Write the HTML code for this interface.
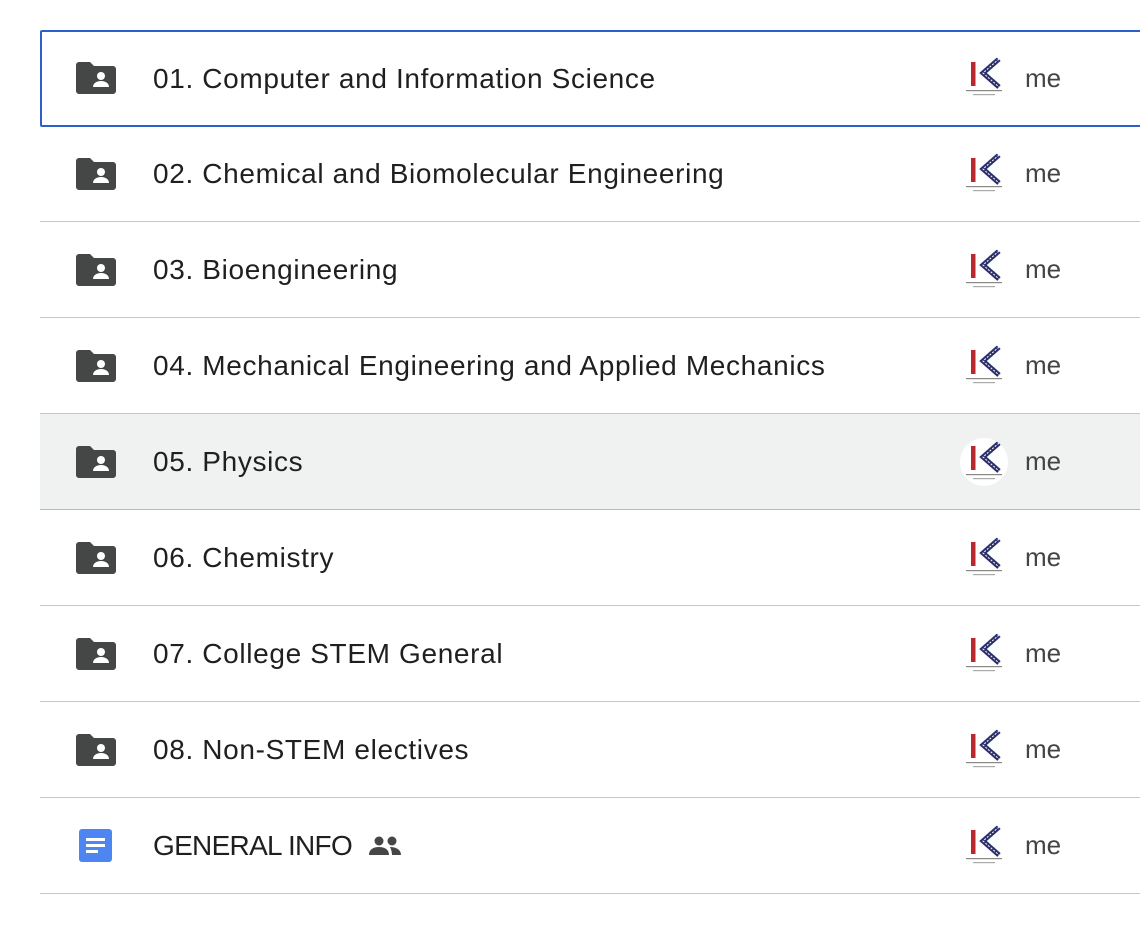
<!DOCTYPE html>
<html><head><style>
body{margin:0;width:1140px;height:934px;background:#fff;font-family:"Liberation Sans",sans-serif;position:relative;overflow:hidden}
.row{position:absolute;left:40px;width:1100px;height:95px;border-bottom:1.5px solid #c7c7c7;box-sizing:content-box}
.row .ic{position:absolute;left:36px;top:32px}
.row .t{position:absolute;left:113px;top:0;line-height:95px;font-size:28px;color:#1f1f1f;letter-spacing:0.65px}
.row .lg{position:absolute;left:920px;top:24px;width:48px;height:48px;border-radius:50%}
.row .me{position:absolute;left:985px;top:0;line-height:95px;font-size:26px;color:#444}
.sel{border:2px solid #2d5fcc;border-radius:2px;height:93px}
.hl{background:#f0f1f1;border-bottom-color:#b8b8b8}
</style></head><body>
<svg width="0" height="0" style="position:absolute"><defs>
<g id="fold"><path d="M3 0h11l4 4h19a3 3 0 0 1 3 3v22a3 3 0 0 1-3 3H3a3 3 0 0 1-3-3V3a3 3 0 0 1 3-3z" fill="#444746"/><circle cx="25" cy="14" r="4" fill="#fff"/><path d="M17 25c0-4 4-6 8-6s8 2 8 6z" fill="#fff"/></g>
<g id="logo"><rect x="11" y="8" width="4.5" height="24" fill="#b8282c"/><path d="M39 5 L23 19 L39 33" fill="none" stroke="#2b2f6e" stroke-width="5"/><path d="M39 5 L23 19 L39 33" fill="none" stroke="#fff" stroke-width="1" stroke-dasharray="2 1.5"/><rect x="6" y="36" width="36" height="1.2" fill="#888"/><rect x="13" y="40" width="22" height="1.2" fill="#aaa"/></g>
</defs></svg>
<div class="row sel" style="top:30px;left:40px;width:1100px"><svg class="ic" width="40" height="32" style="left:34px;top:30px"><use href="#fold"/></svg><div class="t" style="left:111px;line-height:93px">01. Computer and Information Science</div><svg class="lg" style="left:918px;top:22px" width="48" height="48"><use href="#logo"/></svg><div class="me" style="left:983px;line-height:93px">me</div></div>
<div class="row" style="top:126px"><svg class="ic" width="40" height="32"><use href="#fold"/></svg><div class="t">02. Chemical and Biomolecular Engineering</div><svg class="lg" width="48" height="48"><use href="#logo"/></svg><div class="me">me</div></div>
<div class="row" style="top:222px"><svg class="ic" width="40" height="32"><use href="#fold"/></svg><div class="t">03. Bioengineering</div><svg class="lg" width="48" height="48"><use href="#logo"/></svg><div class="me">me</div></div>
<div class="row" style="top:318px"><svg class="ic" width="40" height="32"><use href="#fold"/></svg><div class="t">04. Mechanical Engineering and Applied Mechanics</div><svg class="lg" width="48" height="48"><use href="#logo"/></svg><div class="me">me</div></div>
<div class="row hl" style="top:414px"><svg class="ic" width="40" height="32"><use href="#fold"/></svg><div class="t">05. Physics</div><svg class="lg" width="48" height="48" style="background:#fff"><use href="#logo"/></svg><div class="me">me</div></div>
<div class="row" style="top:510px"><svg class="ic" width="40" height="32"><use href="#fold"/></svg><div class="t">06. Chemistry</div><svg class="lg" width="48" height="48"><use href="#logo"/></svg><div class="me">me</div></div>
<div class="row" style="top:606px"><svg class="ic" width="40" height="32"><use href="#fold"/></svg><div class="t">07. College STEM General</div><svg class="lg" width="48" height="48"><use href="#logo"/></svg><div class="me">me</div></div>
<div class="row" style="top:702px"><svg class="ic" width="40" height="32"><use href="#fold"/></svg><div class="t">08. Non-STEM electives</div><svg class="lg" width="48" height="48"><use href="#logo"/></svg><div class="me">me</div></div>
<div class="row" style="top:798px"><svg class="ic" width="34" height="34" style="left:39px;top:31px"><rect width="33" height="33" rx="3" fill="#4d86f0"/><rect x="7" y="9" width="19" height="3" fill="#fff"/><rect x="7" y="15" width="19" height="3" fill="#fff"/><rect x="7" y="21" width="12" height="3" fill="#fff"/></svg><div class="t" style="letter-spacing:-0.7px">GENERAL INFO</div><svg style="position:absolute;left:328px;top:37px" width="36" height="22"><circle cx="11" cy="6" r="4.5" fill="#444746"/><circle cx="24" cy="6" r="4.5" fill="#444746"/><path d="M1 20c0-6 5-8 10-8s10 2 10 8z" fill="#444746"/><path d="M22 12c5 0 11 2 11 8h-9c0-3-1-6-2-8z" fill="#444746"/></svg><svg class="lg" width="48" height="48"><use href="#logo"/></svg><div class="me">me</div></div>
</body></html>
